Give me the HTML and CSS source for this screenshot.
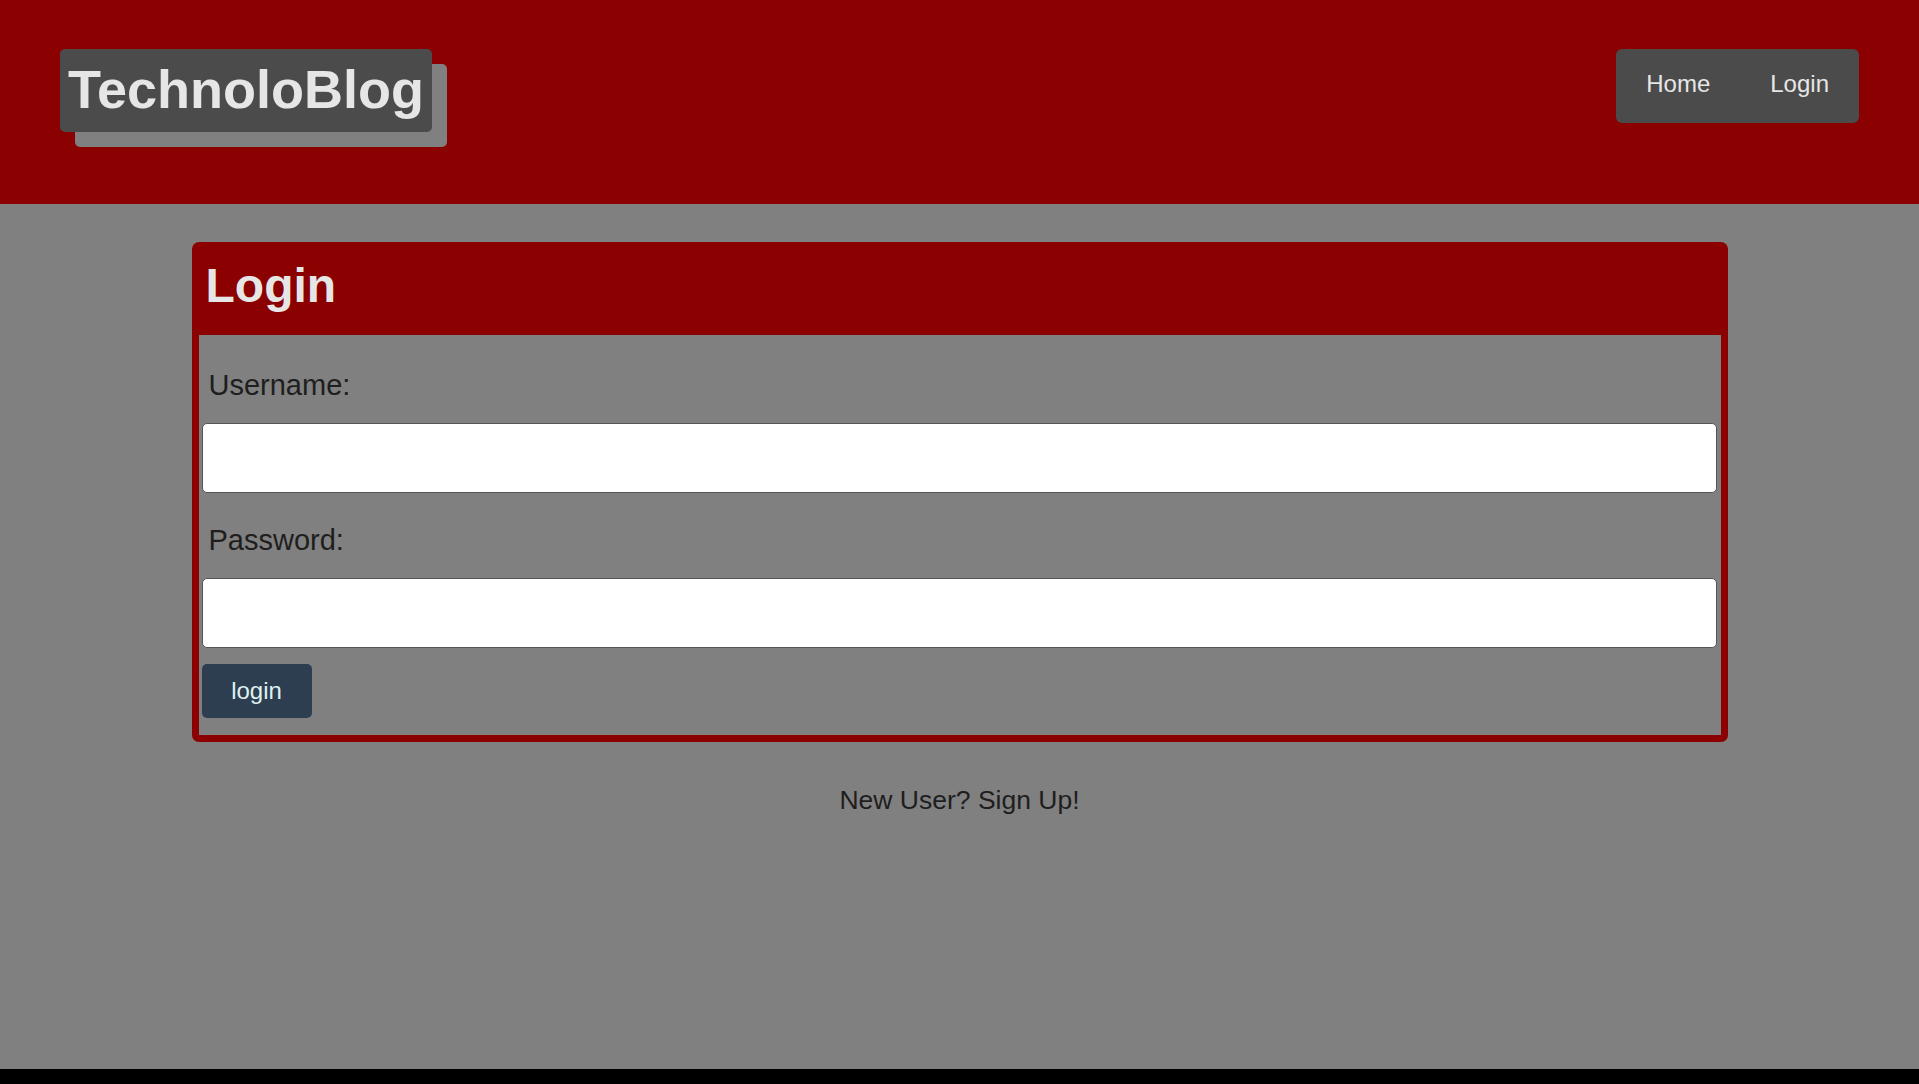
FILE: index.html
```html
<!DOCTYPE html>
<html lang="en">
<head>
<meta charset="utf-8">
<title>TechnoloBlog - Login</title>
<link rel="stylesheet" href="styles.css">
</head>
<body>
<header class="site-header">
  <h1 class="logo">TechnoloBlog</h1>
  <nav class="nav">
    <a class="nav-link" href="#">Home</a>
    <a class="nav-link" href="#">Login</a>
  </nav>
</header>
<main class="main">
  <section class="card">
    <h2 class="card-title">Login</h2>
    <form class="card-body">
      <label class="field-label" for="username">Username:</label>
      <input class="field-input" id="username" type="text">
      <label class="field-label" for="password">Password:</label>
      <input class="field-input" id="password" type="password">
      <button class="btn" type="button">login</button>
    </form>
  </section>
  <p class="signup"><a class="signup-link" href="#">New User? Sign Up!</a></p>
</main>
<footer class="site-footer"></footer>
</body>
</html>
```

FILE: styles.css
```css
* { box-sizing: border-box; }
html, body { margin: 0; padding: 0; }
body {
  min-height: 100vh;
  display: flex;
  flex-direction: column;
  background: #808080;
  font-family: "Liberation Sans", Arial, sans-serif;
  color: #1e1e1e;
}
.site-header {
  height: 204px;
  background: #8b0000;
  padding: 49px 60px 0 60px;
  display: flex;
  justify-content: space-between;
  align-items: flex-start;
}
.logo {
  margin: 0;
  font-size: 54px;
  font-weight: bold;
  color: #e6e6e6;
  background: #4b4b4b;
  padding: 9px 8px 12px 8px;
  border-radius: 5px;
  box-shadow: 15px 15px 0 #808080;
  line-height: normal;
}
.nav {
  display: flex;
  background: #4b4b4b;
  border-radius: 6px;
}
.nav-link {
  font-size: 24px;
  color: #e6e6e6;
  text-decoration: none;
  padding: 21px 30px 25px 30px;
  line-height: normal;
}
.main {
  flex: 1;
  padding-top: 38px;
}
.card {
  width: 1536px;
  margin: 0 auto;
  background: #8b0000;
  border-radius: 7px;
  padding: 0 7px 7px 7px;
}
.card-title {
  margin: 0;
  font-size: 48px;
  font-weight: bold;
  color: #e6e6e6;
  padding: 16px 7px 22px 7px;
  line-height: normal;
}
.card-body {
  background: #808080;
  padding: 3px 4px 17px 3px;
  display: flex;
  flex-direction: column;
  align-items: flex-start;
}
.field-label {
  display: block;
  font-size: 29px;
  color: #1e1e1e;
  margin: 31px 0 21px 0;
  padding-left: 7px;
  line-height: normal;
}
.field-input {
  width: 100%;
  height: 70px;
  background: #fff;
  border: 1px solid #555;
  border-radius: 5px;
  font-size: 24px;
  padding: 0 10px;
}
.btn {
  margin-top: 16px;
  width: 110px;
  height: 54px;
  background: #2c3e50;
  color: #dff0f0;
  border: none;
  border-radius: 5px;
  font-family: "Liberation Sans", Arial, sans-serif;
  font-size: 24px;
  padding: 0;
}
.signup {
  text-align: center;
  margin: 43px 0 0 0;
  font-size: 26.5px;
  line-height: normal;
}
.signup-link {
  color: #1e1e1e;
  text-decoration: none;
}
.site-footer {
  height: 15px;
  background: #000;
}
```
